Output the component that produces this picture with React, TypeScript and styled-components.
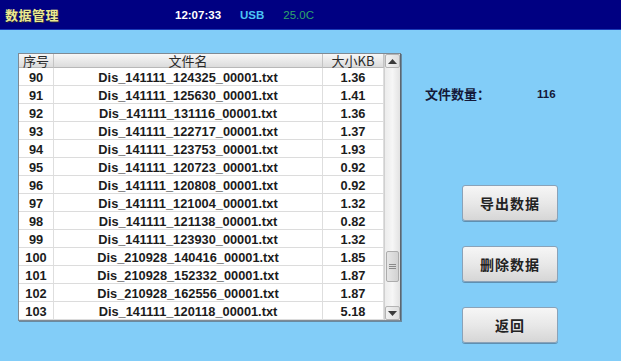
import { createGlobalStyle } from "styled-components";
import styled from "styled-components";

const GlobalStyle = createGlobalStyle`
  html, body {
    margin: 0;
    padding: 0;
    background: #82cdf8;
  }
  body {
    width: 621px;
    height: 361px;
    overflow: hidden;
    font-family: "Liberation Sans", Arial, sans-serif;
  }
`;

const Screen = styled.div`
  width: 621px;
  height: 361px;
  background: #82cdf8;
  display: flex;
  flex-direction: column;
`;

const TopBar = styled.div`
  height: 29px;
  background: #000082;
  border-bottom: 1px solid #1a3bb8;
  display: flex;
  align-items: center;
  padding-left: 5px;
`;

const Title = styled.div`
  font-family: "Noto Sans CJK SC", sans-serif;
  font-weight: 700;
  font-size: 13px;
  letter-spacing: 0.5px;
  color: #ecea90;
  text-shadow: 1px 1px 0 #202040;
  width: 170px;
`;

const Status = styled.span<{ $color: string; $bold?: boolean }>`
  font-size: 11.5px;
  font-weight: ${p => (p.$bold ? 700 : 400)};
  color: ${p => p.$color};
  margin-right: ${p => (p.$bold ? "19px" : "0")};
`;

const Content = styled.div`
  display: flex;
  padding: 23px 0 0 18px;
`;

const TableBox = styled.div`
  width: 383px;
  height: 268px;
  border: 1px solid #7f8a94;
  border-right-color: #5c6670;
  box-shadow: 1px 1px 0 #6a8aa0;
  background: #fff;
  display: flex;
  box-sizing: border-box;
`;

const Grid = styled.div`
  display: grid;
  grid-template-columns: 35px 269px 61px;
  grid-auto-rows: 18px;
  grid-template-rows: 14px;
  width: 365px;
`;

const HeadCell = styled.div`
  background: linear-gradient(#f7f7f7, #dcdcdc);
  border-right: 1px solid #c4c4c4;
  border-bottom: 1px solid #b8b8b8;
  font-family: "Noto Sans CJK SC", sans-serif;
  font-size: 13px;
  line-height: 1;
  color: #2a2a2a;
  display: flex;
  align-items: center;
  justify-content: center;
  white-space: nowrap;
`;

const Cell = styled.div`
  border-right: 1px solid #dedede;
  border-bottom: 1px solid #dcdcdc;
  font-size: 12.8px;
  font-weight: 700;
  color: #1c1c1c;
  display: flex;
  align-items: center;
  justify-content: center;
  padding-top: 1px;
`;

const ScrollBar = styled.div`
  width: 17px;
  display: flex;
  flex-direction: column;
  background: linear-gradient(90deg, #ececec, #f6f6f6 50%, #e2e2e2);
  border-left: 1px solid #d0d0d0;
`;

const ArrowBtn = styled.div`
  height: 14px;
  display: flex;
  align-items: center;
  justify-content: center;
  background: linear-gradient(90deg, #f2f2f2, #dedede);
  border: 1px solid #b4b4b4;
  border-radius: 2px;
  box-sizing: border-box;
`;

const Track = styled.div`
  flex: 1;
  display: flex;
  flex-direction: column;
  padding-top: 183px;
`;

const Thumb = styled.div`
  height: 29px;
  margin: 0 1px;
  background: linear-gradient(90deg, #e6e6e6, #d2d2d2);
  border: 1px solid #acacac;
  border-radius: 2px;
  display: flex;
  align-items: center;
  justify-content: center;
`;

const Grip = styled.div`
  width: 7px;
  height: 5px;
  background: repeating-linear-gradient(#8a8a8a 0 1px, transparent 1px 2px);
`;

const Side = styled.div`
  display: flex;
  flex-direction: column;
  padding-left: 24px;
`;

const CountRow = styled.div`
  margin-top: 31px;
  display: flex;
  align-items: center;
  color: #141838;
  font-weight: 700;
`;

const CountLabel = styled.span`
  font-family: "Noto Sans CJK SC", sans-serif;
  font-size: 13px;
  width: 112px;
`;

const CountValue = styled.span`
  font-size: 11.5px;
`;

const Buttons = styled.div`
  display: flex;
  flex-direction: column;
  gap: 25px;
  margin-top: 82px;
  padding-left: 37px;
`;

const Button = styled.button`
  width: 96px;
  height: 36px;
  padding: 0;
  background: linear-gradient(#f6f6f6, #e8e8e8 50%, #d6d6d6);
  border: 1px solid #8aa2b8;
  border-radius: 3px;
  box-shadow: 0 1px 0 #5f8fb0;
  font-family: "Noto Sans CJK SC", sans-serif;
  font-weight: 700;
  font-size: 14px;
  letter-spacing: 1px;
  color: #222;
`;

const rows: [number, string, string][] = [
  [90, "Dis_141111_124325_00001.txt", "1.36"],
  [91, "Dis_141111_125630_00001.txt", "1.41"],
  [92, "Dis_141111_131116_00001.txt", "1.36"],
  [93, "Dis_141111_122717_00001.txt", "1.37"],
  [94, "Dis_141111_123753_00001.txt", "1.93"],
  [95, "Dis_141111_120723_00001.txt", "0.92"],
  [96, "Dis_141111_120808_00001.txt", "0.92"],
  [97, "Dis_141111_121004_00001.txt", "1.32"],
  [98, "Dis_141111_121138_00001.txt", "0.82"],
  [99, "Dis_141111_123930_00001.txt", "1.32"],
  [100, "Dis_210928_140416_00001.txt", "1.85"],
  [101, "Dis_210928_152332_00001.txt", "1.87"],
  [102, "Dis_210928_162556_00001.txt", "1.87"],
  [103, "Dis_141111_120118_00001.txt", "5.18"],
];

function Arrow({ up }: { up?: boolean }) {
  return (
    <svg width="9" height="5" viewBox="0 0 9 5">
      <path d={up ? "M0 5 L4.5 0 L9 5 Z" : "M0 0 L4.5 5 L9 0 Z"} fill="#3a3a3a" />
    </svg>
  );
}

export default function App() {
  return (
    <Screen>
      <GlobalStyle />
      <TopBar>
        <Title>数据管理</Title>
        <Status $color="#ffffff" $bold>12:07:33</Status>
        <Status $color="#4cc4f4" $bold>USB</Status>
        <Status $color="#2fa56a">25.0C</Status>
      </TopBar>
      <Content>
        <TableBox>
          <Grid>
            <HeadCell>序号</HeadCell>
            <HeadCell>文件名</HeadCell>
            <HeadCell>大小KB</HeadCell>
            {rows.map(([n, name, size]) => (
              <>
                <Cell key={n + "a"}>{n}</Cell>
                <Cell key={n + "b"}>{name}</Cell>
                <Cell key={n + "c"}>{size}</Cell>
              </>
            ))}
          </Grid>
          <ScrollBar>
            <ArrowBtn><Arrow up /></ArrowBtn>
            <Track>
              <Thumb><Grip /></Thumb>
            </Track>
            <ArrowBtn><Arrow /></ArrowBtn>
          </ScrollBar>
        </TableBox>
        <Side>
          <CountRow>
            <CountLabel>文件数量：</CountLabel>
            <CountValue>116</CountValue>
          </CountRow>
          <Buttons>
            <Button>导出数据</Button>
            <Button>删除数据</Button>
            <Button>返回</Button>
          </Buttons>
        </Side>
      </Content>
    </Screen>
  );
}
